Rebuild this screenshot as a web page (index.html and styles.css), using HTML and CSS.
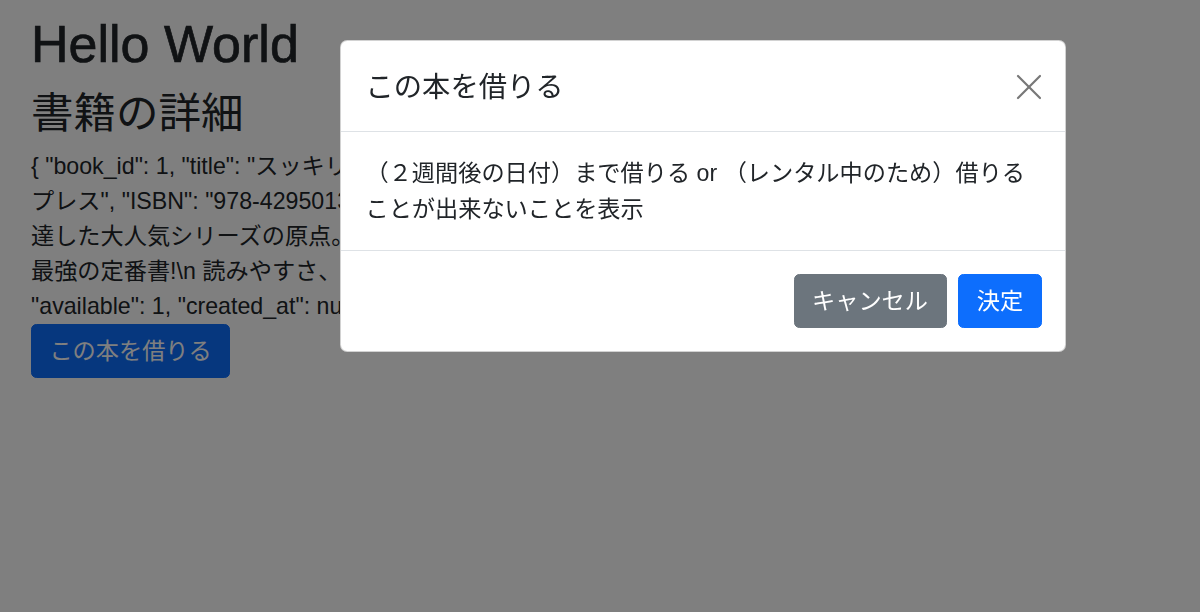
FILE: index.html
```html
<!DOCTYPE html>
<html lang="ja">
<head>
  <meta charset="UTF-8" />
  <title>書籍の詳細</title>
  <link rel="stylesheet" href="styles.css">
</head>
<body>

  <div class="container">
    <h1>Hello World</h1>
    <h2>書籍の詳細</h2>
    <p class="book-json">
      { "book_id": 1, "title": "スッキリわかるJava入門 第3版", "author": "中山清喬", "publisher": "イン<br>
      プレス", "ISBN": "978-4295013501", "description": "シリーズ累計発行部数が90万部に到<br>
      達した大人気シリーズの原点。Java入門書の決定版！<br>
      最強の定番書!\n 読みやすさ、わかりやすさを追求した一冊。",<br>
      "available": 1, "created_at": null, "updated_at": null }
    </p>
    <button class="btn btn-primary">この本を借りる</button>
  </div>

  <!-- 借りる確認モーダル -->
  <div class="modal-backdrop"></div>
  <div class="modal">
    <div class="modal-dialog">
      <div class="modal-content">
        <div class="modal-header">
          <h5 class="modal-title">この本を借りる</h5>
          <button class="btn-close" aria-label="Close">
            <svg width="26" height="26" viewBox="0 0 26 26">
              <line x1="2" y1="2" x2="24" y2="24" />
              <line x1="24" y1="2" x2="2" y2="24" />
            </svg>
          </button>
        </div>
        <div class="modal-body">
          （２週間後の日付）まで借りる or （レンタル中のため）借りることが出来ないことを表示
        </div>
        <div class="modal-footer">
          <button class="btn btn-secondary">キャンセル</button>
          <button class="btn btn-primary">決定</button>
        </div>
      </div>
    </div>
  </div>

</body>
</html>
```

FILE: styles.css
```css
body {
  margin: 0;
  font-family: "Liberation Sans", "Noto Sans CJK JP", sans-serif;
  font-size: 23.2px;
  line-height: 1.5;
  color: #212529;
  background: #fff;
}
.container {
  padding: 0 31px;
}
h1 {
  font-size: 52px;
  font-weight: 500;
  line-height: 62px;
  margin: 13px 0 0;
  -webkit-text-stroke: 0.7px #212529;
}
h2 {
  font-size: 42.5px;
  font-weight: 400;
  line-height: 54px;
  margin: 12px 0 0;
}
.book-json {
  margin: 8px 0 0;
  line-height: 35px;
  white-space: nowrap;
}
.btn {
  display: inline-block;
  font-family: inherit;
  font-size: 23.2px;
  line-height: 34.8px;
  padding: 8.7px 17.4px;
  border: 1.45px solid transparent;
  border-radius: 5.4px;
  color: #fff;
  cursor: pointer;
}
.btn-primary {
  background-color: #0d6efd;
  border-color: #0d6efd;
}
.btn-secondary {
  background-color: #6c757d;
  border-color: #6c757d;
}
.modal-backdrop {
  position: fixed;
  inset: 0;
  background: rgba(0, 0, 0, 0.5);
}
.modal {
  position: fixed;
  inset: 0;
}
.modal-dialog {
  width: 726px;
  margin: 40px 0 0 340px;
}
.modal-content {
  background: #fff;
  border: 1.45px solid rgba(0, 0, 0, 0.175);
  border-radius: 7.25px;
  overflow: hidden;
}
.modal-header {
  display: flex;
  align-items: center;
  justify-content: space-between;
  padding: 25px 23.2px 21.4px 24.5px;
  border-bottom: 1.45px solid #dee2e6;
}
.modal-title {
  margin: 0;
  font-size: 28.3px;
  font-weight: 400;
  line-height: 43.5px;
}
.btn-close {
  display: flex;
  margin-top: -2px;
  padding: 0;
  border: none;
  background: none;
  cursor: pointer;
}
.btn-close svg line {
  stroke: #787878;
  stroke-width: 2.2;
  stroke-linecap: round;
}
.modal-body {
  padding: 23.2px 23.2px 23.2px 24.5px;
  line-height: 36px;
}
.modal-footer {
  display: flex;
  justify-content: flex-end;
  gap: 11px;
  padding: 23px 23.5px 22.5px;
  border-top: 1.45px solid #dee2e6;
}
.modal-footer .btn-secondary {
  padding-right: 18.4px;
}
```
